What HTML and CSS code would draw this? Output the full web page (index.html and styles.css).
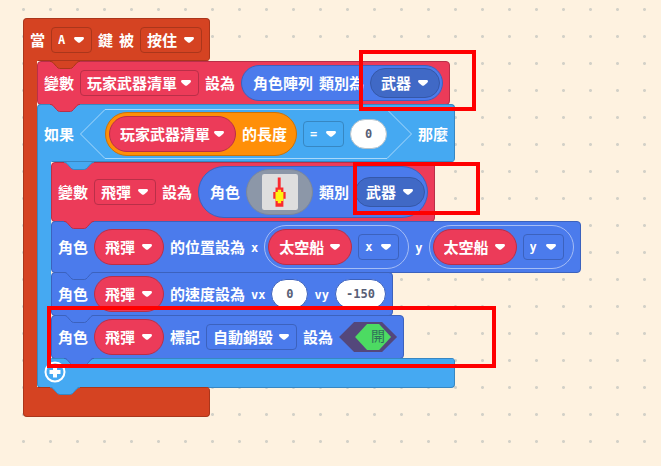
FILE: index.html
```html
<!DOCTYPE html>
<html lang="zh-Hant">
<head>
<meta charset="utf-8">
<title>積木程式</title>
<link rel="stylesheet" href="styles.css">
</head>
<body>
<svg class="defs" aria-hidden="true">
  <symbol id="tab" viewBox="0 0 30 8">
    <path class="tab-fill" d="M0 0H30V1H29Q28 1 27 2L23.5 5.500Q22 7 20.500 7H9.500Q8 7 6.500 5.500L3 2Q2 1 1 1H0Z"/>
    <path class="tab-line" d="M0 .5H1Q2 .5 3 1.500L6.500 5.500Q8 7.500 9.500 7.500H20.500Q22 7.500 23.500 5.500L27 1.500Q28 .5 29 .5H30"/>
  </symbol>
</svg>
<main class="workspace">
  <div class="wrap event">
    <div class="wrap-head">
      <span>當</span>
      <select class="box w-key" aria-label="按鍵"><option>A</option></select>
      <span>鍵</span><span>被</span>
      <select class="box w-two" aria-label="按鍵事件"><option>按住</option></select>
      <svg class="tab"><use href="#tab"/></svg>
    </div>
    <div class="wrap-body">
      <div class="block variable">
        <span>變數</span>
        <select class="box w-list" aria-label="變數名稱"><option>玩家武器清單</option></select>
        <span>設為</span>
        <div class="value sprite">
          <span>角色陣列</span><span>類別為</span>
          <select class="pill kind w-pill" aria-label="類別"><option>武器</option></select>
        </div>
        <svg class="tab"><use href="#tab"/></svg>
      </div>
      <div class="wrap logic">
        <div class="wrap-head">
          <span>如果</span>
          <div class="compare">
            <svg class="hex-end" viewBox="0 0 25 50"><path d="M25 .5L.5 25L25 49.500"/></svg>
            <div class="compare-body">
              <div class="value array">
                <select class="pill name w-pill-list" aria-label="陣列"><option>玩家武器清單</option></select>
                <span>的長度</span>
              </div>
              <select class="box w-key" aria-label="比較"><option>=</option></select>
              <input class="number" aria-label="比較值" value="0">
            </div>
            <svg class="hex-end" viewBox="0 0 25 50"><path d="M0 .5L24.500 25L0 49.500"/></svg>
          </div>
          <span>那麼</span>
          <svg class="tab"><use href="#tab"/></svg>
        </div>
        <div class="wrap-body">
          <div class="block variable">
            <span>變數</span>
            <select class="box w-two" aria-label="變數名稱"><option>飛彈</option></select>
            <span>設為</span>
            <div class="value sprite">
              <span>角色</span>
              <button class="image" aria-label="編輯圖像">
                <svg viewBox="0 0 16 16">
                  <rect class="paper" width="16" height="16" rx="1"/>
                  <path class="red" d="M7 1.500H8.300V6H9.500V8H10.500V11H9.500V14.500H6V11H5V8H6V6H7Z"/>
                  <path class="yellow" d="M7 7H8.500V8H9.500V12H8.500V13H7V12H6V8H7Z"/>
                </svg>
              </button>
              <span>類別</span>
              <select class="pill kind w-pill" aria-label="類別"><option>武器</option></select>
            </div>
            <svg class="tab"><use href="#tab"/></svg>
          </div>
          <div class="block sprite">
            <span>角色</span>
            <select class="pill name w-pill" aria-label="角色"><option>飛彈</option></select>
            <span>的位置設為</span><span class="latin">x</span>
            <div class="property">
              <select class="pill name w-pill-three" aria-label="角色"><option>太空船</option></select>
              <select class="box w-key" aria-label="屬性"><option>x</option></select>
            </div>
            <span class="latin">y</span>
            <div class="property">
              <select class="pill name w-pill-three" aria-label="角色"><option>太空船</option></select>
              <select class="box w-key" aria-label="屬性"><option>y</option></select>
            </div>
            <svg class="tab"><use href="#tab"/></svg>
          </div>
          <div class="block sprite">
            <span>角色</span>
            <select class="pill name w-pill" aria-label="角色"><option>飛彈</option></select>
            <span>的速度設為</span><span class="latin">vx</span>
            <input class="number" aria-label="vx" value="0">
            <span class="latin">vy</span>
            <input class="number wide" aria-label="vy" value="-150">
            <svg class="tab"><use href="#tab"/></svg>
          </div>
          <div class="block sprite">
            <span>角色</span>
            <select class="pill name w-pill" aria-label="角色"><option>飛彈</option></select>
            <span>標記</span>
            <select class="box w-four" aria-label="標記"><option>自動銷毀</option></select>
            <span>設為</span>
            <button class="switch" role="switch" aria-checked="true"><span class="thumb">開</span></button>
            <svg class="tab"><use href="#tab"/></svg>
          </div>
        </div>
        <div class="wrap-foot">
          <button class="add" aria-label="新增條件">
            <svg viewBox="0 0 22 22"><circle cx="11" cy="11" r="9.500"/><path d="M11 5.500V16.500M5.500 11H16.500"/></svg>
          </button>
          <svg class="tab"><use href="#tab"/></svg>
        </div>
      </div>
    </div>
    <div class="wrap-foot"></div>
  </div>
  <div class="mark mark-list"></div>
  <div class="mark mark-kind"></div>
  <div class="mark mark-flag"></div>
</main>
</body>
</html>
```
FILE: styles.css
```css
* { box-sizing: border-box; }

body {
  margin: 0;
  background: #fef2e0;
  color: #fff;
  font: bold 15px/20px "Noto Sans CJK TC", sans-serif;
}

select, input, button {
  margin: 0;
  padding: 0;
  border: 0;
  color: inherit;
  font: inherit;
  appearance: none;
}

.defs { position: absolute; width: 0; height: 0; }

.workspace {
  position: relative;
  min-height: 100vh;
  padding: 18px 23px;
  overflow: hidden;
  background: radial-gradient(circle, #d3d1c8 1px, transparent 2px) 10px 23px / 27px 27px;
}

.event { --fill: #d54322; --line: #aa361b; }
.variable { --fill: #ec3b59; --line: #b92f48; }
.logic { --fill: #45a9f2; --line: #3787c2; }
.sprite { --fill: #4b7bec; --line: #3c62bd; }
.array { --fill: #ff8f08; --line: #cc7206; }

/* Blocks */
.block, .wrap-head {
  position: relative;
  display: flex;
  align-items: center;
  gap: 6px;
  width: max-content;
  padding: 3px 6px;
  border: 1px solid var(--line);
  border-radius: 4px;
  background: var(--fill);
  white-space: nowrap;
}

.block { min-height: 44px; margin-bottom: -1px; }

.wrap { width: max-content; }

.wrap-head {
  min-height: 43px;
  border-bottom: 0;
  border-radius: 4px 4px 4px 0;
  background: linear-gradient(var(--line), var(--line)) 14px 100% / 100% 1px no-repeat var(--fill);
}

.event > .wrap-head { padding-right: 7px; }
.logic > .wrap-head { min-height: 58px; }

.wrap-body {
  width: 0;
  padding-left: 14px;
  background: linear-gradient(90deg, var(--line) 1px, var(--fill) 1px);
}

.wrap-foot {
  position: relative;
  min-height: 30px;
  border: 1px solid var(--line);
  border-top: 0;
  border-radius: 0 4px 4px 4px;
  background: linear-gradient(var(--line), var(--line)) 14px 0 / 100% 1px no-repeat var(--fill);
}

.logic { margin-bottom: -1px; }
.logic > .wrap-foot { padding: 3px 6px; }

.tab {
  position: absolute;
  z-index: 1;
  top: 100%;
  left: 12px;
  width: 30px;
  height: 8px;
}

.wrap-head > .tab { left: 26px; }
.tab-fill { fill: var(--fill); }
.tab-line { fill: none; stroke: var(--line); }

/* Nested values */
.value, .property {
  display: flex;
  align-items: center;
  gap: 6px;
  min-height: 36px;
  padding: 3px 2px 3px 11px;
  border: 1px solid var(--line);
  border-radius: 30px;
  background: var(--fill);
}

.block > .value { padding-block: 2px; }
.array { padding: 3px 9px 3px 3px; }

.property {
  padding: 3px 9px 3px 3px;
  border-color: #a5bdf5;
}

.compare { display: flex; }

.compare-body {
  display: flex;
  align-items: center;
  gap: 6px;
  padding: 2px 0;
  border: solid #a9d8fa;
  border-width: 1px 0;
}

.hex-end { width: 25px; height: 50px; }
.hex-end path { fill: none; stroke: #a9d8fa; }

.latin { font: bold 12px/20px "DejaVu Sans Mono", monospace; padding-top: 2px; }

/* Fields */
.box, .pill {
  height: 26px;
  padding-left: 6px;
  border: 1px solid var(--line);
  border-radius: 4px;
  background: url("data:image/svg+xml,%3Csvg xmlns='http://www.w3.org/2000/svg' viewBox='0 0 10 6'%3E%3Cpath fill='white' d='M1.500 0H8.500Q10 0 10 1.300Q10 2 9 3L6 5.500Q5 6.200 4 5.500L1 3Q0 2 0 1.300Q0 0 1.500 0'/%3E%3C/svg%3E") right 7px center / 10px 6px no-repeat;
}

.pill {
  height: 36px;
  padding-left: 10px;
  border-radius: 18px;
  background-color: var(--pill);
  background-position: right 11px center;
}

.name { --pill: #ec3b59; border-color: #b92f48; }
.kind { --pill: #4069c6; height: 30px; border-color: #3558a8; }

.w-key { width: 41px; font: bold 12px/20px "DejaVu Sans Mono", monospace; }
.w-two { width: 62px; }
.w-four { width: 91px; }
.w-list { width: 119px; }
.w-pill { width: 70px; }
.w-pill-three { width: 84px; }
.w-pill-list { width: 127px; }

.number {
  width: 37px;
  height: 30px;
  border: 1px solid #3c62bd;
  border-radius: 15px;
  background: #fff;
  color: #575e75;
  font: bold 12px/20px "DejaVu Sans Mono", monospace;
  text-align: center;
}

.compare .number { border-color: #b5c3cd; }
.wide { width: 51px; }

.image {
  display: grid;
  place-items: center;
  width: 67px;
  height: 46px;
  border: 1px solid #7b879b;
  border-radius: 23px;
  background: #8c97a8;
}

.image svg { width: 36px; height: 36px; }
.paper { fill: #dedede; }
.red { fill: #f92a2f; }
.yellow { fill: #fff310; }

.switch {
  display: flex;
  justify-content: flex-end;
  align-items: center;
  width: 58px;
  height: 30px;
  padding-right: 6px;
  background: #54477b;
  clip-path: polygon(0 50%, 15px 0, 43px 0, 100% 50%, 43px 100%, 15px 100%);
}

.thumb {
  width: 36px;
  height: 26px;
  padding-left: 16px;
  background: #4cdb62;
  color: #31705a;
  font-size: 14px;
  font-weight: normal;
  line-height: 22px;
  text-align: left;
  clip-path: polygon(0 50%, 12px 0, 24px 0, 100% 50%, 24px 100%, 12px 100%);
}

.add { display: block; width: 22px; height: 22px; background: none; }
.add svg { display: block; }
.add circle { fill: none; stroke: #fff; stroke-width: 2; }
.add path { stroke: #fff; stroke-width: 4; }

/* Highlight frames over the canvas */
.mark {
  position: absolute;
  z-index: 2;
  border: 4px solid #f00;
  pointer-events: none;
}

.mark-list { left: 359px; top: 50px; width: 117px; height: 61px; }
.mark-kind { left: 353px; top: 162px; width: 127px; height: 53px; }
.mark-flag { left: 47px; top: 306px; width: 449px; height: 62px; }
```
